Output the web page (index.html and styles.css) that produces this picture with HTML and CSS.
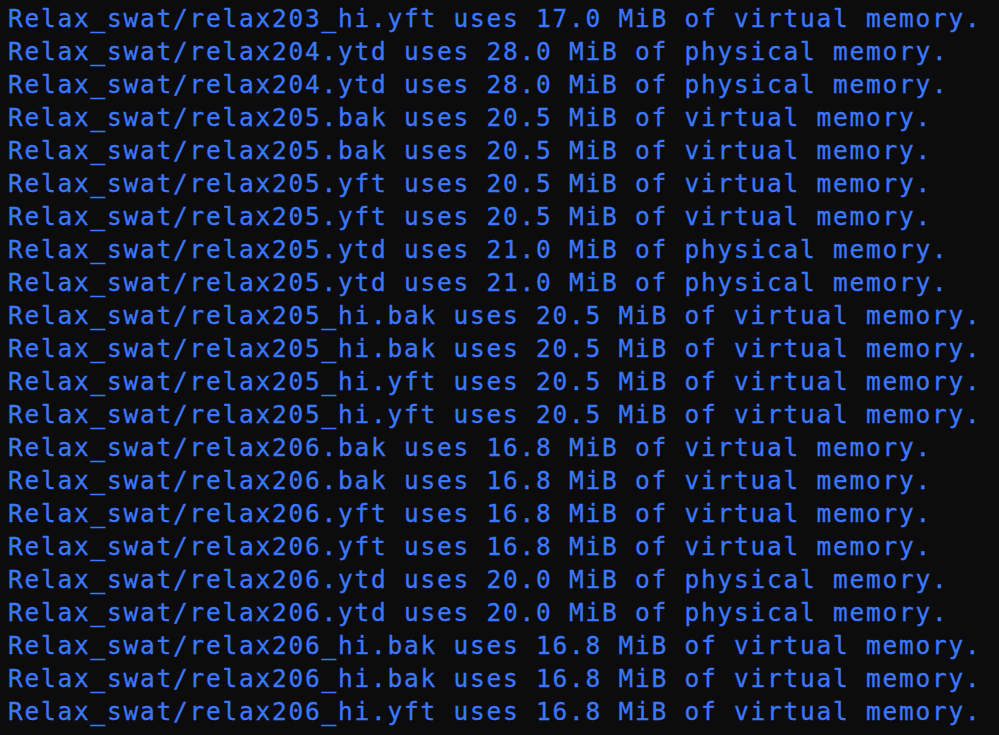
FILE: index.html
```html
<!DOCTYPE html>
<html>
<head>
<meta charset="utf-8">
<link rel="stylesheet" href="styles.css">
</head>
<body>
<div class="term">
<div class="line">Relax_swat/relax203_hi.yft uses 17.0 MiB of virtual memory.</div>
<div class="line">Relax_swat/relax204.ytd uses 28.0 MiB of physical memory.</div>
<div class="line">Relax_swat/relax204.ytd uses 28.0 MiB of physical memory.</div>
<div class="line">Relax_swat/relax205.bak uses 20.5 MiB of virtual memory.</div>
<div class="line">Relax_swat/relax205.bak uses 20.5 MiB of virtual memory.</div>
<div class="line">Relax_swat/relax205.yft uses 20.5 MiB of virtual memory.</div>
<div class="line">Relax_swat/relax205.yft uses 20.5 MiB of virtual memory.</div>
<div class="line">Relax_swat/relax205.ytd uses 21.0 MiB of physical memory.</div>
<div class="line">Relax_swat/relax205.ytd uses 21.0 MiB of physical memory.</div>
<div class="line">Relax_swat/relax205_hi.bak uses 20.5 MiB of virtual memory.</div>
<div class="line">Relax_swat/relax205_hi.bak uses 20.5 MiB of virtual memory.</div>
<div class="line">Relax_swat/relax205_hi.yft uses 20.5 MiB of virtual memory.</div>
<div class="line">Relax_swat/relax205_hi.yft uses 20.5 MiB of virtual memory.</div>
<div class="line">Relax_swat/relax206.bak uses 16.8 MiB of virtual memory.</div>
<div class="line">Relax_swat/relax206.bak uses 16.8 MiB of virtual memory.</div>
<div class="line">Relax_swat/relax206.yft uses 16.8 MiB of virtual memory.</div>
<div class="line">Relax_swat/relax206.yft uses 16.8 MiB of virtual memory.</div>
<div class="line">Relax_swat/relax206.ytd uses 20.0 MiB of physical memory.</div>
<div class="line">Relax_swat/relax206.ytd uses 20.0 MiB of physical memory.</div>
<div class="line">Relax_swat/relax206_hi.bak uses 16.8 MiB of virtual memory.</div>
<div class="line">Relax_swat/relax206_hi.bak uses 16.8 MiB of virtual memory.</div>
<div class="line">Relax_swat/relax206_hi.yft uses 16.8 MiB of virtual memory.</div>
</div>
</body>
</html>
```
FILE: styles.css
```css
html, body {
  margin: 0;
  padding: 0;
  background: #0c0c0c;
  height: 100%;
  overflow: hidden;
}
.term {
  padding: 2px 0 0 8px;
  font-family: "DejaVu Sans Mono", monospace;
  font-size: 24.5px;
  letter-spacing: 1.75px;
  line-height: 33px;
  color: #3b78ff;
  -webkit-text-stroke: 0.3px #3b78ff;
}
.line {
  white-space: pre;
}
```
